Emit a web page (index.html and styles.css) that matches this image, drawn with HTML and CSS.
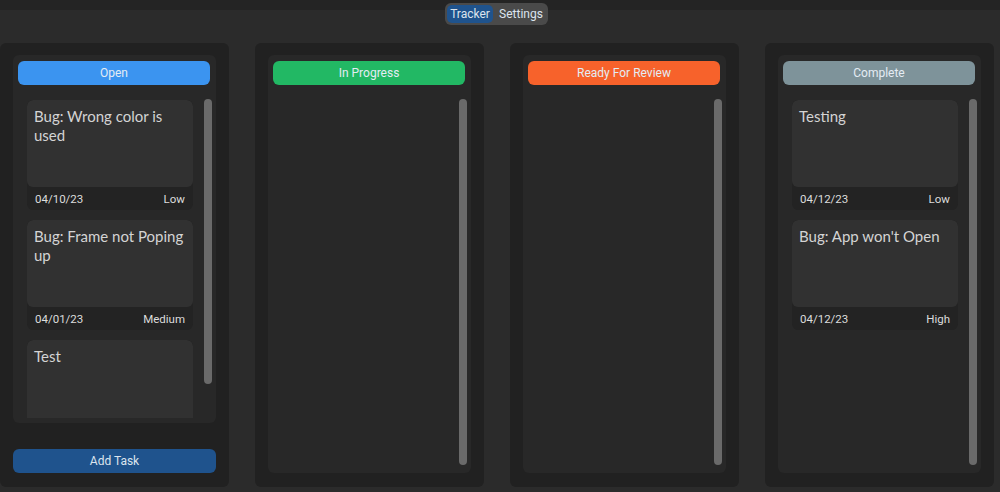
FILE: index.html
```html
<!DOCTYPE html>
<html>
<head>
<meta charset="utf-8">
<link rel="stylesheet" href="styles.css">
</head>
<body>
<div class="app">
  <div class="tabs">
    <span class="seg seg-on">Tracker</span><span class="seg seg-off">Settings</span>
  </div>
  <div class="board">
    <section class="col">
      <div class="list">
        <div class="head head-open">Open</div>
        <div class="scroll scroll-short">
          <div class="cards">
            <div class="card">
              <div class="card-body">Bug: Wrong color is used</div>
              <div class="card-foot"><span>04/10/23</span><span>Low</span></div>
            </div>
            <div class="card">
              <div class="card-body">Bug: Frame not Poping up</div>
              <div class="card-foot"><span>04/01/23</span><span>Medium</span></div>
            </div>
            <div class="card">
              <div class="card-body">Test</div>
              <div class="card-foot"></div>
            </div>
          </div>
          <div class="track"><div class="thumb thumb-short"></div></div>
        </div>
      </div>
      <button class="add">Add Task</button>
    </section>
    <section class="col">
      <div class="list list-full">
        <div class="head head-progress">In Progress</div>
        <div class="scroll">
          <div class="cards"></div>
          <div class="track"><div class="thumb"></div></div>
        </div>
      </div>
    </section>
    <section class="col">
      <div class="list list-full">
        <div class="head head-review">Ready For Review</div>
        <div class="scroll">
          <div class="cards"></div>
          <div class="track"><div class="thumb"></div></div>
        </div>
      </div>
    </section>
    <section class="col">
      <div class="list list-full">
        <div class="head head-complete">Complete</div>
        <div class="scroll">
          <div class="cards">
            <div class="card">
              <div class="card-body">Testing</div>
              <div class="card-foot"><span>04/12/23</span><span>Low</span></div>
            </div>
            <div class="card">
              <div class="card-body">Bug: App won't Open</div>
              <div class="card-foot"><span>04/12/23</span><span>High</span></div>
            </div>
          </div>
          <div class="track"><div class="thumb"></div></div>
        </div>
      </div>
    </section>
  </div>
</div>
</body>
</html>
```
FILE: styles.css
```css
* { box-sizing: border-box; }
html, body { margin: 0; padding: 0; }
body {
  width: 1000px;
  height: 492px;
  overflow: hidden;
  background: #242424;
  font-family: Roboto, "Liberation Sans", sans-serif;
  color: #dce4ee;
}
.app {
  position: relative;
  width: 1000px;
  height: 492px;
  padding-top: 10px;
}
.tabs {
  position: absolute;
  top: 3px;
  left: 445px;
  height: 22px;
  width: 103px;
  padding: 2px;
  display: flex;
  background: #4a4a4a;
  border-radius: 6px;
  z-index: 2;
}
.seg {
  font-size: 12px;
  line-height: 18px;
  border-radius: 5px;
  text-align: center;
  color: #dce4ee;
}
.seg-on { background: #1f538d; width: 47px; }
.seg-off { width: 54px; padding-left: 3px; }
.board {
  height: 482px;
  background: #2b2b2b;
  padding-top: 33px;
  display: flex;
  gap: 26px;
}
.col {
  width: 229px;
  height: 444px;
  background: #212121;
  border-radius: 6px;
  padding: 12px 13px 14px 13px;
  display: flex;
  flex-direction: column;
}
.list {
  background: #282828;
  border-radius: 6px;
  height: 368px;
  padding: 6px 0 0 5px;
  display: flex;
  flex-direction: column;
}
.list-full { height: 418px; }
.head {
  width: 192px;
  height: 24px;
  border-radius: 6px;
  font-size: 12px;
  line-height: 24px;
  text-align: center;
  color: #e4ecf4;
}
.head-open { background: #3b94f0; }
.head-progress { background: #22b864; }
.head-review { background: #f7622b; }
.head-complete { background: #7e939a; }
.scroll {
  margin-top: 14px;
  flex: 1;
  display: flex;
  overflow: hidden;
  margin-bottom: 8px;
}
.scroll-short { margin-bottom: 5px; }
.cards {
  margin-left: 9px;
  width: 166px;
  padding-top: 1px;
  display: flex;
  flex-direction: column;
  gap: 10px;
}
.card {
  flex: none;
  border-radius: 6px;
  overflow: hidden;
  background: #232323;
}
.card-body {
  height: 87px;
  background: #313131;
  border-radius: 6px;
  padding: 7px 2px 0 7px;
  font-family: Lato, "Noto Sans", sans-serif;
  font-size: 15px;
  line-height: 19px;
  color: #d4d4d4;
}
.card-foot {
  height: 23px;
  display: flex;
  justify-content: space-between;
  align-items: center;
  padding: 0 8px;
  font-size: 11.5px;
  color: #dcdcdc;
}
.track {
  margin-left: 11px;
  width: 8px;
}
.thumb {
  width: 8px;
  height: 100%;
  background: #6a6a6a;
  border-radius: 4px;
}
.thumb-short { height: 285px; }
.add {
  margin-top: 26px;
  height: 24px;
  width: 203px;
  border: none;
  border-radius: 6px;
  background: #1f538d;
  color: #dce4ee;
  font-family: Roboto, "Liberation Sans", sans-serif;
  font-size: 12px;
  padding: 0;
}
```
